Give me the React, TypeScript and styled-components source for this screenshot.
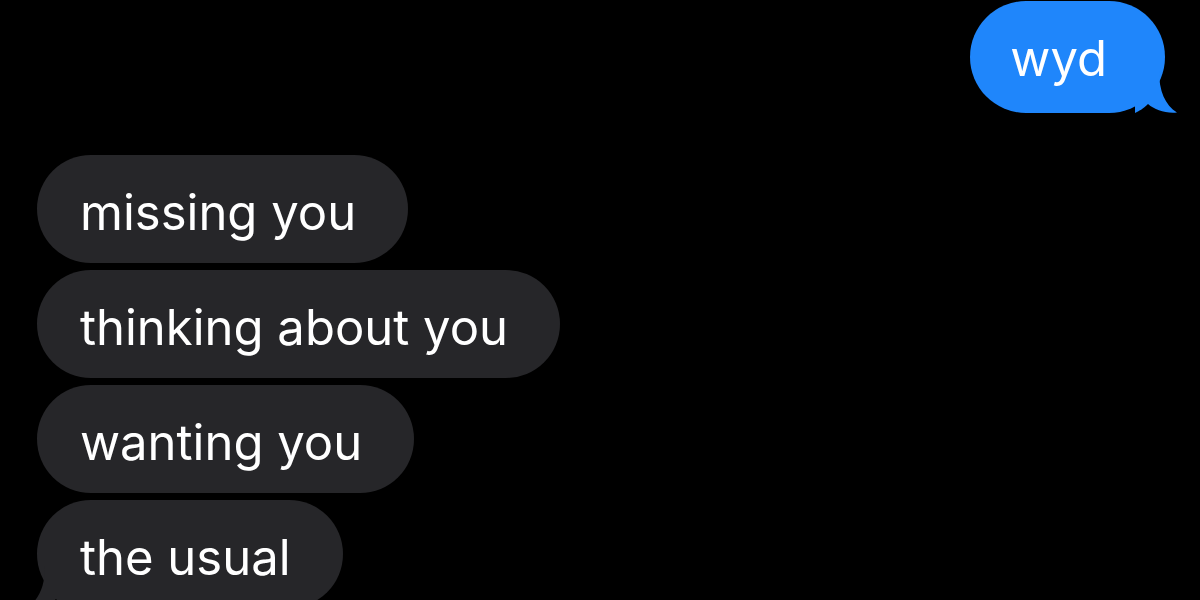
import React, { FC } from 'react';
import styled, { createGlobalStyle } from 'styled-components';

const GlobalStyle = createGlobalStyle`
  html, body {
    margin: 0;
    padding: 0;
    background: #000;
  }
  body {
    font-family: Inter, "Noto Sans", "Liberation Sans", sans-serif;
    -webkit-font-smoothing: antialiased;
  }
`;

const Screen = styled.div`
  width: 1200px;
  height: 600px;
  overflow: hidden;
  background: #000;
  display: flex;
  flex-direction: column;
  padding: 1px 35px 0 37px;
  box-sizing: border-box;
`;

const Row = styled.div<{ $mine?: boolean }>`
  display: flex;
  justify-content: ${(p) => (p.$mine ? 'flex-end' : 'flex-start')};
  margin-bottom: 7px;
`;

const Bubble = styled.div<{ $mine?: boolean }>`
  position: relative;
  height: ${(p) => (p.$mine ? '112px' : '108px')};
  box-sizing: border-box;
  display: flex;
  align-items: center;
  padding: ${(p) => (p.$mine ? '2px 58px 0 40px' : '7px 52px 0 43px')};
  border-radius: 56px;
  background: ${(p) => (p.$mine ? '#1f86fb' : '#262629')};
  color: #fff;
  font-size: 49px;
  white-space: nowrap;
`;

const Tail = styled.svg<{ $mine?: boolean }>`
  position: absolute;
  bottom: 0;
  width: 42px;
  height: 42px;
  ${(p) => (p.$mine ? 'right: -12px;' : 'left: -10px;')}
`;

const Groups = styled.div`
  margin-top: 35px;
`;

type Msg = { text: string; mine?: boolean; tail?: boolean };

const messages: Msg[] = [
  { text: 'missing you' },
  { text: 'thinking about you' },
  { text: 'wanting you' },
  { text: 'the usual', tail: true },
];

const Message: FC<Msg> = ({ text, mine, tail }) => (
  <Row $mine={mine}>
    <Bubble $mine={mine}>
      {text}
      {tail && (
        <Tail $mine={mine} viewBox="0 0 42 42">
          {mine ? (
            <path
              d="M0 0 L24 0 C24 20 30 34 42 41.5 C30 42.5 20 39 13 33 C8 38 4 40 0 42 Z"
              fill="#1f86fb"
            />
          ) : (
            <path
              d="M42 0 L18 0 C18 20 12 34 0 41.5 C12 42.5 22 39 29 33 C34 38 38 40 42 42 Z"
              fill="#262629"
            />
          )}
        </Tail>
      )}
    </Bubble>
  </Row>
);

const App: FC = () => (
  <>
    <GlobalStyle />
    <Screen>
      <Message text="wyd" mine tail />
      <Groups>
        {messages.map((m) => (
          <Message key={m.text} {...m} />
        ))}
      </Groups>
    </Screen>
  </>
);

export default App;
